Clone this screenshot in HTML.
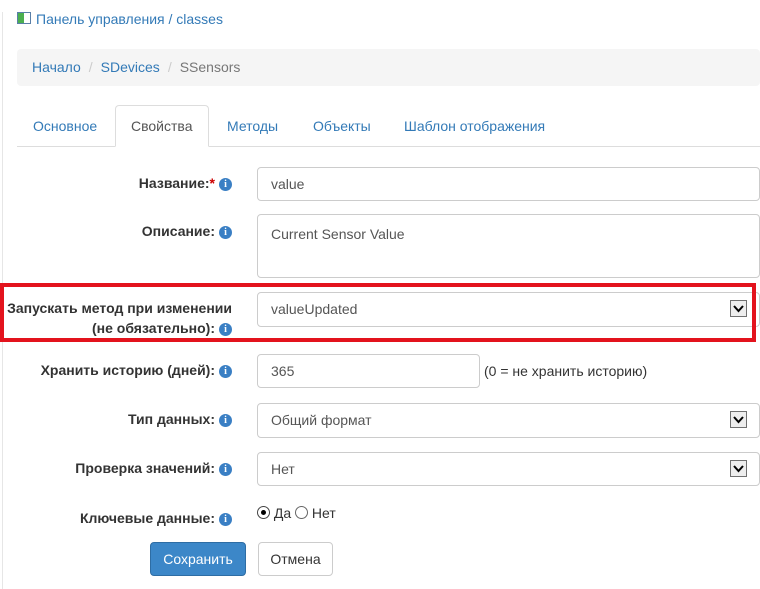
<!DOCTYPE html>
<html><head><meta charset="utf-8"><style>
body{margin:0;width:760px;height:589px;background:#fff;font-family:"Liberation Sans",Arial,sans-serif;font-size:14px;color:#333;position:relative;overflow:hidden}
.a{position:absolute}
.lnk{color:#337ab7}
.lbl{position:absolute;right:528px;font-weight:bold;text-align:right;line-height:20px;white-space:nowrap}
.i{display:inline-block;width:13px;height:13px;border-radius:50%;background:#3a7fc4;color:#fff;font-size:10px;font-weight:bold;text-align:center;line-height:13px;font-family:"Liberation Serif",serif;vertical-align:1px;margin-left:4px}
.inp{position:absolute;left:257px;border:1px solid #ccc;border-radius:4px;box-sizing:border-box;padding:0 13px;line-height:32px;color:#555}
.dd{position:absolute;right:12px;top:7px;width:17px;height:17px;border:1px solid #707070;background:#eee;box-sizing:border-box}
.dd svg{position:absolute;left:2px;top:3px}
</style></head><body>
<div class="a" style="left:2px;top:12px;width:1px;height:577px;background:#e6e6e6"></div>
<div class="a" style="left:17px;top:12px;width:14px;height:12px;border:1px solid #5a7fa8;box-sizing:border-box;background:#fff"><div style="width:6px;height:10px;background:#4caf50"></div></div>
<div class="a lnk" style="left:36px;top:11px">Панель управления / classes</div>
<div class="a" style="left:17px;top:49px;width:743px;height:37px;background:#f5f5f5;border-radius:4px"></div>
<div class="a" style="left:32px;top:59px"><span class="lnk">Начало</span><span style="color:#ccc;padding:0 8px">/</span><span class="lnk">SDevices</span><span style="color:#ccc;padding:0 8px">/</span><span style="color:#777">SSensors</span></div>
<div class="a" style="left:17px;top:146px;width:743px;height:1px;background:#ddd"></div>
<div class="a" style="left:115px;top:105px;width:94px;height:42px;border:1px solid #ddd;border-bottom-color:#fff;border-radius:4px 4px 0 0;box-sizing:border-box;background:#fff"></div>
<div class="a lnk" style="left:33px;top:118px">Основное</div>
<div class="a" style="left:131px;top:118px;color:#555">Свойства</div>
<div class="a lnk" style="left:227px;top:118px">Методы</div>
<div class="a lnk" style="left:313px;top:118px">Объекты</div>
<div class="a lnk" style="left:404px;top:118px">Шаблон отображения</div>

<div class="lbl" style="top:173px">Название:<span style="color:#c00">*</span><span class="i">i</span></div>
<div class="inp" style="top:167px;width:503px;height:34px">value</div>
<div class="lbl" style="top:221px">Описание:<span class="i">i</span></div>
<div class="inp" style="top:214px;width:503px;height:64px;line-height:20px;padding-top:9px">Current Sensor Value</div>

<div class="lbl" style="top:298px">Запускать метод при изменении<br>(не обязательно):<span class="i">i</span></div>
<div class="inp" style="top:292px;width:503px;height:35px">valueUpdated<div class="dd"><svg width="11" height="9"><path d="M1 2L5.5 7L10 2" stroke="#000" stroke-width="2" fill="none"/></svg></div></div>
<div class="a" style="left:0;top:283px;width:756px;height:59px;border:4px solid #e3131d;box-sizing:border-box"></div>

<div class="lbl" style="top:360px">Хранить историю (дней):<span class="i">i</span></div>
<div class="inp" style="top:354px;width:223px;height:34px">365</div>
<div class="a" style="left:484px;top:363px">(0 = не хранить историю)</div>

<div class="lbl" style="top:409px">Тип данных:<span class="i">i</span></div>
<div class="inp" style="top:403px;width:503px;height:35px">Общий формат<div class="dd"><svg width="11" height="9"><path d="M1 2L5.5 7L10 2" stroke="#000" stroke-width="2" fill="none"/></svg></div></div>
<div class="lbl" style="top:458px">Проверка значений:<span class="i">i</span></div>
<div class="inp" style="top:452px;width:503px;height:34px">Нет<div class="dd"><svg width="11" height="9"><path d="M1 2L5.5 7L10 2" stroke="#000" stroke-width="2" fill="none"/></svg></div></div>

<div class="lbl" style="top:508px">Ключевые данные:<span class="i">i</span></div>
<div class="a" style="left:257px;top:505px;line-height:16px"><span style="display:inline-block;width:11px;height:11px;border:1px solid #444;border-radius:50%;vertical-align:-1px;position:relative"><span style="position:absolute;left:3px;top:3px;width:5px;height:5px;border-radius:50%;background:#000"></span></span> Да <span style="display:inline-block;width:11px;height:11px;border:1px solid #666;border-radius:50%;vertical-align:-1px"></span> Нет</div>

<div class="a" style="left:150px;top:542px;width:96px;height:34px;background:#3c87c8;border:1px solid #2e6da4;border-radius:4px;box-sizing:border-box;color:#fff;text-align:center;line-height:32px">Сохранить</div>
<div class="a" style="left:258px;top:542px;width:75px;height:34px;background:#fff;border:1px solid #ccc;border-radius:4px;box-sizing:border-box;text-align:center;line-height:32px">Отмена</div>
</body></html>
